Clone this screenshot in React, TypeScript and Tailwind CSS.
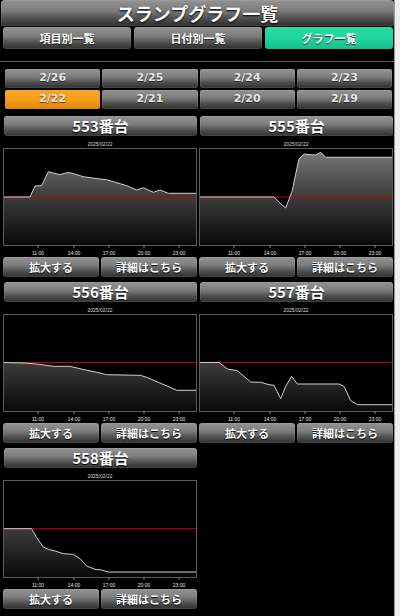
import React, { useId } from 'react';

type Pt = [number, number];

interface Machine {
  no: number;
  zero: number;
  points: Pt[];
}

const tabs = ['項目別一覧', '日付別一覧', 'グラフ一覧'];
const dates = ['2/26', '2/25', '2/24', '2/23', '2/22', '2/21', '2/20', '2/19'];
const hours = [
  { x: 35, label: '11:00' },
  { x: 71, label: '14:00' },
  { x: 106, label: '17:00' },
  { x: 141, label: '20:00' },
  { x: 176, label: '23:00' },
];

const machines: Machine[] = [
  {
    no: 553,
    zero: 49,
    points: [
      [0, 49], [27, 49], [32, 38], [38.7, 37.7], [45.3, 23.7], [50.3, 25], [57, 26.7], [63.7, 24.7],
      [68.7, 25], [80.3, 28.7], [97, 31], [103.7, 31.7], [110.3, 33.7], [123.7, 37.7], [133.7, 42],
      [140.3, 39.7], [150.3, 44.3], [157, 42], [165.3, 45.3], [194, 45.3],
    ],
  },
  {
    no: 555,
    zero: 49,
    points: [
      [0, 49], [75, 49], [80, 54.3], [86.7, 60], [93.3, 42.7], [96.7, 26], [100, 11], [105, 6],
      [111.7, 6.7], [116.7, 7], [121.7, 4.3], [126.7, 9.3], [194, 9.3],
    ],
  },
  {
    no: 556,
    zero: 48.5,
    points: [
      [0, 48.5], [22, 49], [33.7, 50], [50.3, 52.3], [67, 52.3], [77, 54.7], [93.7, 58.3],
      [103.7, 60.7], [137, 61.3], [143.7, 63.3], [167, 73.3], [173.7, 76.3], [194, 76.3],
    ],
  },
  {
    no: 557,
    zero: 48.5,
    points: [
      [0, 48.5], [20, 48.5], [28.3, 55], [38.3, 56.7], [51.7, 68], [61.7, 68.3], [70, 70.7],
      [75, 71.3], [81.7, 84.7], [86.7, 72.3], [92.7, 62.3], [98.3, 70], [140, 70], [145, 72.3],
      [151.7, 86.7], [158.3, 90.7], [194, 90.7],
    ],
  },
  {
    no: 558,
    zero: 48.7,
    points: [
      [0, 48.7], [28.7, 48.7], [33.7, 57.7], [40.3, 67], [45.3, 69.3], [52, 71], [60.3, 73.7],
      [70.3, 74.3], [77, 78.7], [83.7, 86], [92, 89.3], [98.7, 90], [105.3, 92], [194, 92],
    ],
  },
];

const grayBtn =
  'bg-[linear-gradient(to_bottom,#939393_0%,#7d7d7d_40%,#4e4e4e_72%,#2f2f2f_100%)] shadow-[inset_0_0_0_1px_rgba(255,255,255,0.08)]';

const SlumpChart: React.FC<{ zero: number; points: Pt[] }> = ({ zero, points }) => {
  const gid = useId();
  const line = points.map(([x, y]) => `${x},${y}`).join(' ');
  const area = `0,97 ${line} 194,97`;

  return (
    <svg width="194" height="109" viewBox="0 0 194 109" className="block">
      <defs>
        <linearGradient id={gid} gradientUnits="userSpaceOnUse" x1="0" y1="0" x2="0" y2="97">
          <stop offset="0" stopColor="#7c7c7c" />
          <stop offset="0.5" stopColor="#3c3c3c" />
          <stop offset="1" stopColor="#080808" />
        </linearGradient>
      </defs>
      <rect x="0" y="0" width="194" height="98" fill="#000" />
      <polygon points={area} fill={`url(#${gid})`} />
      <line x1="0" y1={zero} x2="194" y2={zero} stroke="#c40000" strokeWidth="1" />
      <polyline points={line} fill="none" stroke="#cfcfcf" strokeWidth="1" />
      <rect x="0.5" y="0.5" width="193" height="97" fill="none" stroke="#5a5a5a" strokeWidth="1" />
      {hours.map((h) => (
        <g key={h.label}>
          <line x1={h.x} y1="97" x2={h.x} y2="100" stroke="#9a9a9a" strokeWidth="0.8" />
          <text
            x={h.x}
            y="107"
            fontSize="5"
            fill="#e0e0e0"
            textAnchor="middle"
            fontFamily="'Liberation Sans', sans-serif"
          >
            {h.label}
          </text>
        </g>
      ))}
    </svg>
  );
};

const MachineCard: React.FC<{ m: Machine }> = ({ m }) => (
  <div className="flex flex-col w-[194px] mb-[5px]">
    <div
      className={`h-[20px] ml-[1px] rounded-[3px] flex items-center justify-center text-white font-bold text-[15px] [text-shadow:0_1px_1px_#000] ${grayBtn}`}
    >
      {m.no}番台
    </div>
    <div className="h-[12px] flex items-end justify-center pb-[1px] text-[5px] leading-none text-[#d8d8d8] font-['Liberation_Sans',sans-serif]">
      2025/02/22
    </div>
    <SlumpChart zero={m.zero} points={m.points} />
    <div className="grid grid-cols-2 gap-[2px] h-[20px]">
      {['拡大する', '詳細はこちら'].map((t) => (
        <div
          key={t}
          className={`rounded-[3px] flex items-center justify-center text-white font-bold text-[11px] [text-shadow:0_1px_1px_#000] ${grayBtn}`}
        >
          {t}
        </div>
      ))}
    </div>
  </div>
);

export default function App() {
  return (
    <div className="min-h-[616px] bg-[#efefef] font-['Noto_Sans_CJK_JP','Noto_Sans',sans-serif]">
      <div className="w-[395px] min-h-[616px] bg-black border-r border-[#9a9a9a]">
        <div
          className={`h-[26px] ml-[1px] rounded-t-[4px] flex items-center justify-center text-white font-bold text-[18px] [text-shadow:0_1px_2px_#000] ${grayBtn}`}
        >
          スランプグラフ一覧
        </div>

        <div className="grid grid-cols-3 gap-[3px] pl-[3px] pr-[1px] mt-[1px] h-[22px]">
          {tabs.map((t, i) => (
            <div
              key={t}
              className={`rounded-[3px] flex items-center justify-center text-white font-bold text-[11px] [text-shadow:0_1px_1px_rgba(0,0,0,0.7)] ${
                i === 2
                  ? 'bg-[linear-gradient(to_bottom,#26dca6_0%,#1fd49d_55%,#17bf8b_100%)]'
                  : grayBtn
              }`}
            >
              {t}
            </div>
          ))}
        </div>

        <div className="h-[12px]" />
        <div className="h-[1px] bg-[#5e5e5e]" />
        <div className="h-[7px]" />

        <div className="grid grid-cols-4 gap-[2px] pl-[5px] pr-[2px]">
          {dates.map((d) => (
            <div
              key={d}
              className={`h-[19px] rounded-[2px] flex items-center justify-center font-bold text-[11px] text-[#e6e6e6] font-['DejaVu_Sans',sans-serif] [text-shadow:0_1px_1px_rgba(0,0,0,0.6)] ${
                d === '2/22'
                  ? 'bg-[linear-gradient(to_bottom,#fba626_0%,#f59c1a_55%,#dc850e_100%)]'
                  : grayBtn
              }`}
            >
              {d}
            </div>
          ))}
        </div>

        <div className="grid grid-cols-2 gap-x-[2px] pl-[3px] pr-[1px] mt-[7px]">
          {machines.map((m) => (
            <MachineCard key={m.no} m={m} />
          ))}
        </div>
      </div>
    </div>
  );
}
